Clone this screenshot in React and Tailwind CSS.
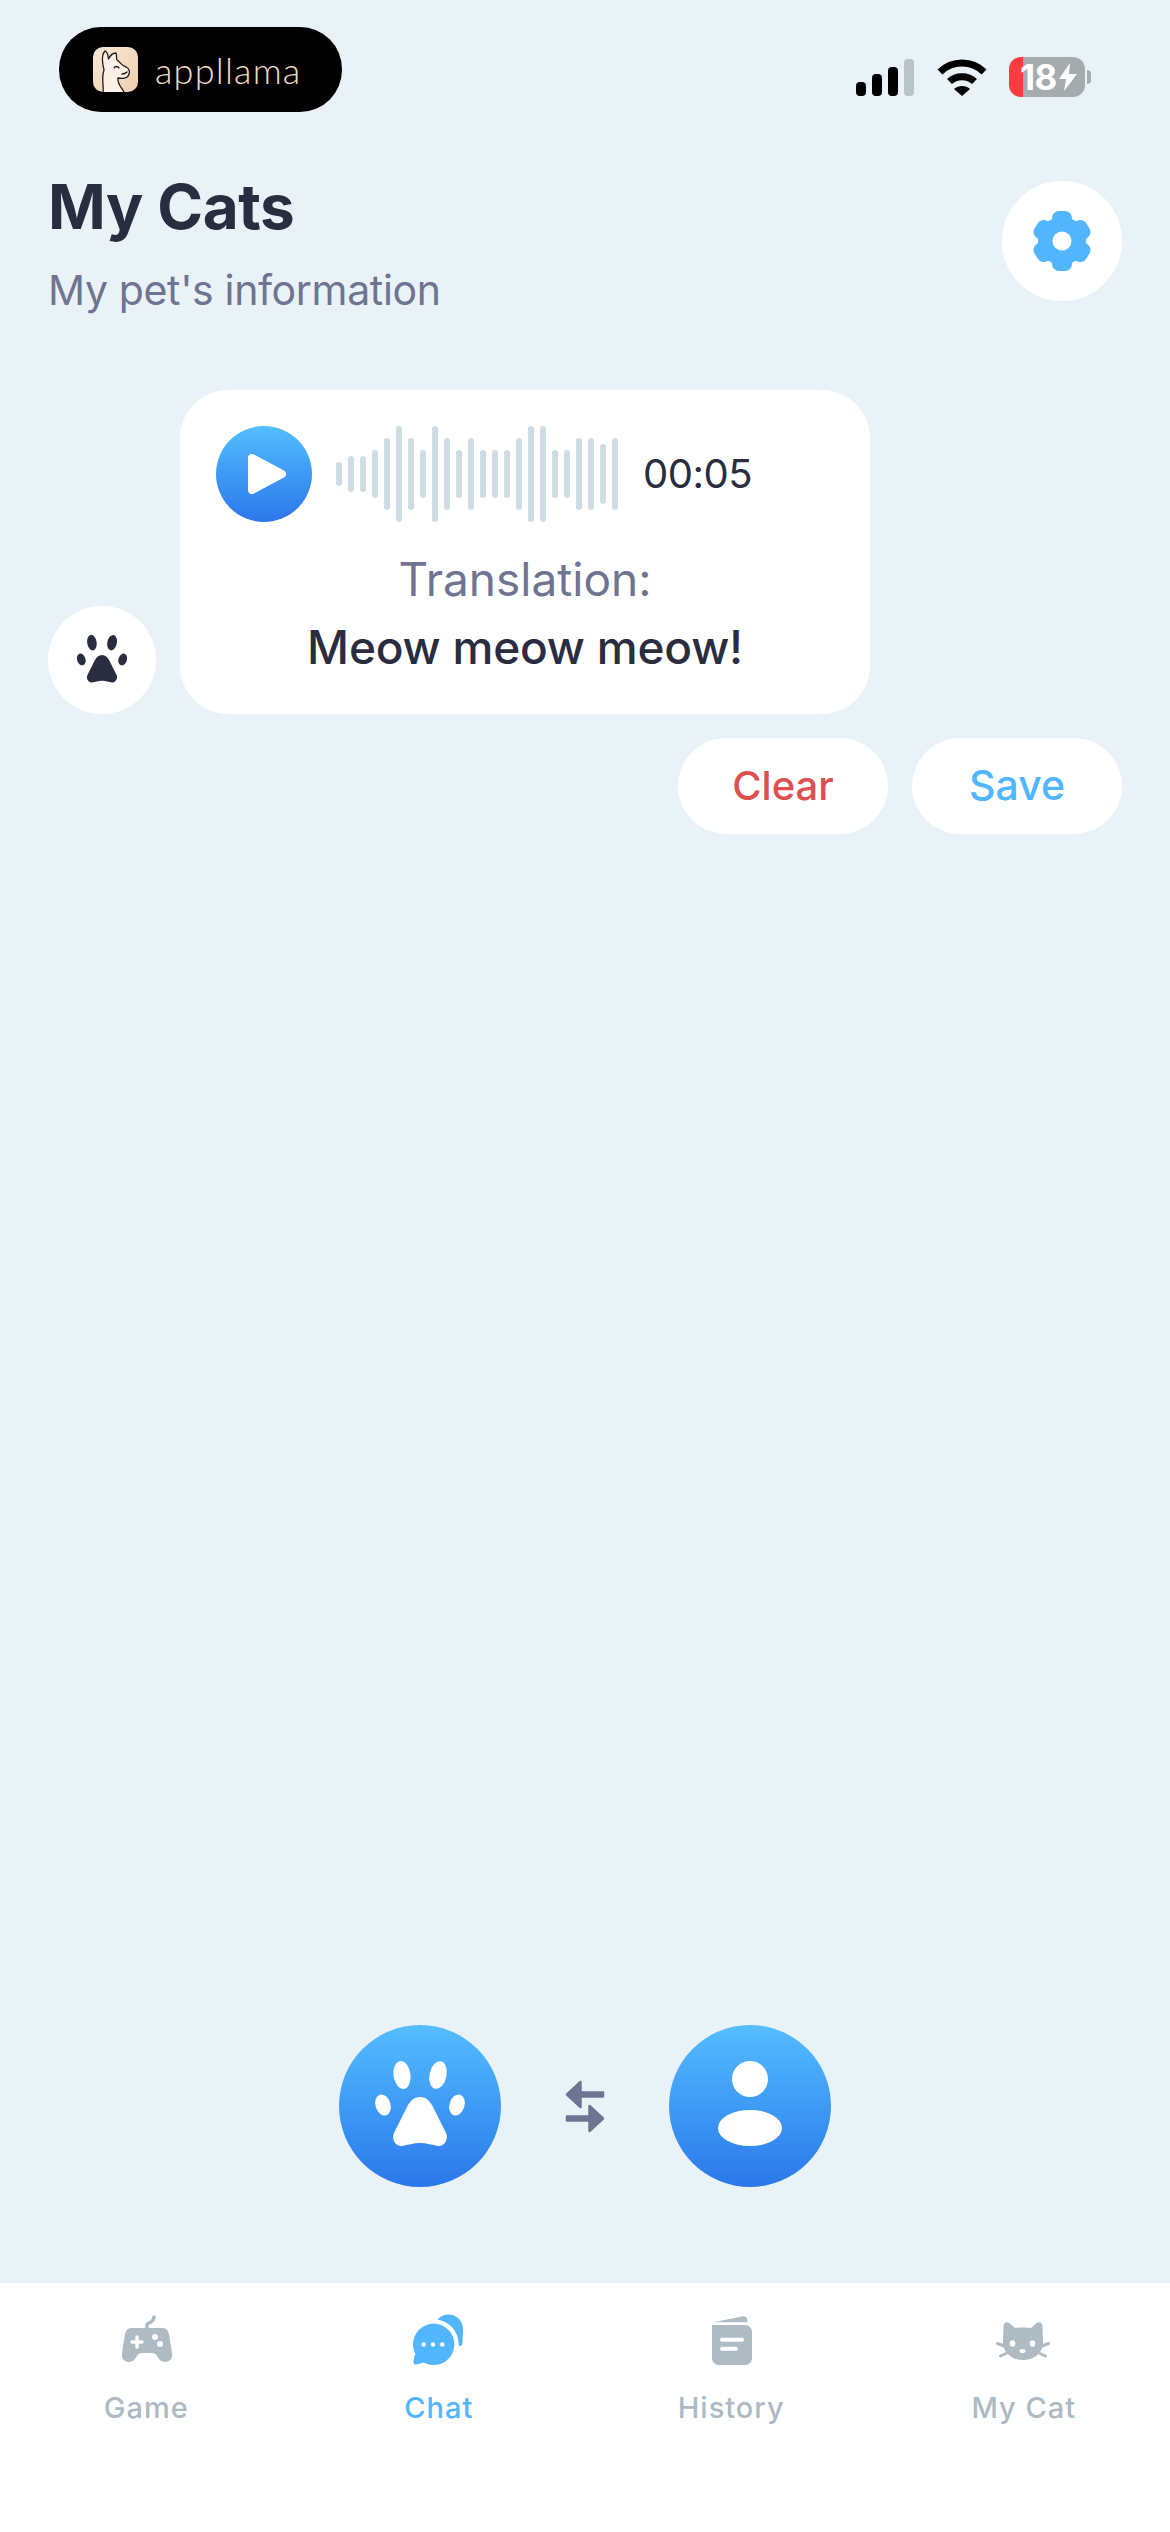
import React from "react";

const bars = [24, 36, 36, 48, 72, 96, 72, 48, 96, 72, 48, 72, 48, 48, 48, 72, 96, 96, 48, 48, 72, 72, 60, 72];
const signal = ["h-[14px] bg-black", "h-[22px] bg-black", "h-[29px] bg-black", "h-[37px] bg-[#bac3c6]"];

function PawShape({ fill }) {
  return (
    <g fill={fill}>
      <ellipse cx="-18" cy="-31" rx="8.5" ry="14" transform="rotate(-8 -18 -31)" />
      <ellipse cx="18" cy="-31" rx="8.5" ry="14" transform="rotate(12 18 -31)" />
      <ellipse cx="-37" cy="-1" rx="7.5" ry="10.8" transform="rotate(-18 -37 -1)" />
      <ellipse cx="37" cy="-1" rx="7.5" ry="10.8" transform="rotate(18 37 -1)" />
      <path d="M0 -9C6 -9 10 -5 13 1L26 27C29 33 24 41 18 40C12 39 7 37 0 37C-7 37 -12 39 -18 40C-24 41 -29 33 -26 27L-13 1C-10 -5 -6 -9 0 -9Z" />
    </g>
  );
}

function Gear() {
  return (
    <svg width="60" height="60" viewBox="-30 -30 60 60">
      <g fill="#52b6ff">
        <rect x="-10" y="-30" width="20" height="60" rx="7" />
        <rect x="-10" y="-30" width="20" height="60" rx="7" transform="rotate(60)" />
        <rect x="-10" y="-30" width="20" height="60" rx="7" transform="rotate(120)" />
        <circle r="24" />
      </g>
      <circle r="9.5" fill="#ffffff" />
    </svg>
  );
}

function Llama() {
  return (
    <div className="w-[45px] h-[45px] rounded-[10px] overflow-hidden bg-gradient-to-br from-[#f8e8d6] to-[#efcfae]">
      <svg width="45" height="45" viewBox="0 0 45 45" fill="none" stroke="#1d1a18" strokeWidth="1.3" strokeLinecap="round" strokeLinejoin="round">
        <path d="M10 45C11 38 8 31 11 23C9 15 9 7 12 4C15 5 15 9 15.5 12C17 9 20 6 23 6C24 8 23 11 24 13C27 15 29 19 33 20C36 21 37 25 36 27C35 31 30 32 25 31C24 36 28 40 31 45" fill="#fbf1e6" />
        <path d="M21 21C22 19 25 19 26 21" />
        <path d="M29 27C31 27 33 26 34 25" />
      </svg>
    </div>
  );
}

function GameIcon() {
  return (
    <svg width="60" height="60" viewBox="0 0 60 60">
      <path d="M31 19V15C31 12 38 13 38 7" fill="none" stroke="#aebbc3" strokeWidth="3.5" strokeLinecap="round" />
      <path d="M15 18H47C50 18 52 20 53 24L56 43C57 49 53 52 49 52C45 52 43 49 41 46C40 44 38 43 36 43H26C24 43 22 44 21 46C19 49 17 52 13 52C9 52 5 49 6 43L9 24C10 20 12 18 15 18Z" fill="#aebbc3" />
      <path d="M21 27V37M16 32H26" stroke="#ffffff" strokeWidth="3.4" strokeLinecap="round" />
      <circle cx="39" cy="27" r="3" fill="#ffffff" />
      <circle cx="44" cy="34" r="3" fill="#ffffff" />
    </svg>
  );
}

function ChatIcon() {
  return (
    <svg width="60" height="60" viewBox="0 0 60 60">
      <g fill="#52b6ff">
        <circle cx="39.5" cy="19" r="14.5" />
        <path d="M46 20H54L53.5 33C53.3 37 49 37 49 33Z" />
      </g>
      <circle cx="24.7" cy="34.3" r="25" fill="#ffffff" />
      <circle cx="24.7" cy="34.3" r="20.7" fill="#52b6ff" />
      <path d="M6 44L4.5 51C4 54 6 55 8 54.5L16 52Z" fill="#52b6ff" />
      <g fill="#ffffff">
        <circle cx="14.7" cy="34.5" r="2.2" />
        <circle cx="24" cy="34.5" r="2.2" />
        <circle cx="33.3" cy="34.5" r="2.2" />
      </g>
    </svg>
  );
}

function HistoryIcon() {
  return (
    <svg width="60" height="60" viewBox="0 0 60 60">
      <path d="M12.5 12.2L42 6.3C45 5.8 46.5 8 46.5 12.2Z" fill="#aebbc3" />
      <path d="M11 15H44C48 15 51 18 51 22V48C51 52 48 55 44 55H18C14 55 11 52 11 48Z" fill="#aebbc3" />
      <rect x="19" y="27.7" width="24" height="4" rx="2" fill="#ffffff" />
      <rect x="19" y="36.7" width="18" height="4" rx="2" fill="#ffffff" />
    </svg>
  );
}

function CatIcon() {
  return (
    <svg width="60" height="60" viewBox="0 0 60 60">
      <path d="M9.5 17C9.5 12 13 11 16 13.5L21 18C25 17.2 33 17.2 37 18L42 13.5C45 11 48.5 12 48.5 17L49 32C49 44 39 50 29 50C19 50 9 44 9 32Z" fill="#aebbc3" />
      <path d="M10 36L3.5 33.5M12 43.5L6.5 46M48 36L54.5 33.5M46 43.5L51.5 46" stroke="#aebbc3" strokeWidth="3" strokeLinecap="round" />
      <ellipse cx="18.5" cy="33.5" rx="2.8" ry="3.2" fill="#ffffff" />
      <ellipse cx="38.5" cy="33.5" rx="2.8" ry="3.2" fill="#ffffff" />
      <ellipse cx="28.5" cy="41" rx="3" ry="2" fill="#ffffff" />
    </svg>
  );
}

const tabs = [
  { label: "Game", Icon: GameIcon },
  { label: "Chat", Icon: ChatIcon, active: true },
  { label: "History", Icon: HistoryIcon },
  { label: "My Cat", Icon: CatIcon },
];

export default function App() {
  return (
    <div className="w-[1170px] h-[2532px] flex flex-col bg-[#e9f2f7] text-[#2a2c40] font-['Inter','Liberation_Sans',sans-serif]">
      {/* status bar */}
      <div className="flex justify-between items-start pt-[27px] pl-[59px] pr-[79px]">
        <div className="w-[283px] h-[85px] rounded-[42px] bg-black flex items-center pl-[34px] gap-[17px]">
          <Llama />
          <span className="text-[36px] leading-[40px] font-light text-[#f0dcc6] tracking-[1.2px] font-['Lato',sans-serif]">appllama</span>
        </div>
        <div className="flex items-center mt-[30px] h-[40px]">
          <div className="flex items-end gap-[6px] h-[37px]">
            {signal.map((c, i) => (
              <div key={i} className={`w-[10px] rounded-[4px] ${c}`} />
            ))}
          </div>
          <svg className="ml-[23px]" width="50" height="37" viewBox="0 0 50 37" fill="none">
            <path d="M3 13C15 1 35 1 47 13" stroke="#000" strokeWidth="7" />
            <path d="M12.5 22.5C19 16 31 16 37.5 22.5" stroke="#000" strokeWidth="7" />
            <path d="M17 30C21 26 29 26 33 30L25 37Z" fill="#000" />
          </svg>
          <div className="ml-[22px] w-[76px] h-[40px] rounded-[12px] flex items-center pl-[11px] bg-[linear-gradient(90deg,#ff3b40_14px,#a6abae_14px)]">
            <span className="text-[35px] leading-[40px] font-bold text-white tracking-[-0.5px]">18</span>
            <svg className="ml-[2px]" width="18" height="28" viewBox="0 0 18 28">
              <path d="M11 0L0 16H7L5 28L18 11H10Z" fill="#ffffff" />
            </svg>
          </div>
          <div className="ml-[2px] w-[4px] h-[14px] rounded-r-[4px] bg-[#a6abae]" />
        </div>
      </div>

      {/* header */}
      <div className="flex justify-between items-start mt-[69px] px-[48px]">
        <div className="-mt-[12px]">
          <h1 className="text-[62px] leading-[76px] font-bold tracking-[-0.4px]">My Cats</h1>
          <p className="mt-[20px] text-[41px] leading-[50px] text-[#6e7491] tracking-[-0.35px]">My pet's information</p>
        </div>
        <button className="w-[120px] h-[120px] rounded-full bg-white flex items-center justify-center">
          <Gear />
        </button>
      </div>

      {/* message */}
      <div className="flex items-end gap-[24px] mt-[75px] pl-[48px]">
        <div className="w-[108px] h-[108px] rounded-full bg-white flex items-center justify-center">
          <svg width="56" height="56" viewBox="-50 -50 100 100">
            <PawShape fill="#2a2c40" />
          </svg>
        </div>
        <div className="w-[690px] h-[324px] rounded-[48px] bg-white pt-[36px] px-[36px]">
          <div className="flex items-center">
            <div className="w-[96px] h-[96px] rounded-full bg-gradient-to-b from-[#55bdff] to-[#2c77ea]">
              <svg width="96" height="96" viewBox="0 0 96 96">
                <path d="M36 32L66 48L36 64Z" fill="#ffffff" stroke="#ffffff" strokeWidth="8" strokeLinejoin="round" />
              </svg>
            </div>
            <div className="flex items-center gap-[6px] ml-[24px]">
              {bars.map((h, i) => (
                <div key={i} className="w-[6px] rounded-full bg-[#cfdce3]" style={{ height: h }} />
              ))}
            </div>
            <span className="ml-[25px] text-[40px] leading-[50px] tracking-[-0.5px]">00:05</span>
          </div>
          <p className="mt-[29px] text-center text-[46px] leading-[56px] text-[#6e7491]">Translation:</p>
          <p className="mt-[10px] text-center text-[46px] leading-[60px] font-[450] tracking-[-0.2px]">Meow meow meow!</p>
        </div>
      </div>

      {/* clear / save */}
      <div className="flex justify-end gap-[24px] mt-[24px] pr-[48px]">
        <button className="w-[210px] h-[96px] rounded-[48px] bg-white text-[40px] font-medium text-[#dc5050]">Clear</button>
        <button className="w-[210px] h-[96px] rounded-[48px] bg-white text-[41px] font-medium text-[#52b6ff]">Save</button>
      </div>

      {/* speaker switch */}
      <div className="flex justify-center items-center gap-[64px] mt-auto mb-[96px]">
        <div className="w-[162px] h-[162px] rounded-full bg-gradient-to-b from-[#55bdff] to-[#2c77ea] flex items-center justify-center">
          <svg width="100" height="100" viewBox="-50 -50 100 100">
            <PawShape fill="#ffffff" />
          </svg>
        </div>
        <svg width="40" height="53" viewBox="0 0 40 53">
          <path d="M2 14.5L15.5 2V27Z M17 12.5H38V16.5H17Z" fill="#6e7491" stroke="#6e7491" strokeWidth="2.5" strokeLinejoin="round" />
          <path d="M38 38.5L24.5 26V51Z M23 36.5H2V40.5H23Z" fill="#6e7491" stroke="#6e7491" strokeWidth="2.5" strokeLinejoin="round" />
        </svg>
        <div className="w-[162px] h-[162px] rounded-full bg-gradient-to-b from-[#55bdff] to-[#2c77ea] flex items-center justify-center">
          <svg width="100" height="100" viewBox="-50 -50 100 100">
            <ellipse cx="0" cy="-27" rx="18" ry="18" fill="#ffffff" />
            <ellipse cx="0" cy="22" rx="32" ry="18" fill="#ffffff" />
          </svg>
        </div>
      </div>

      {/* tab bar */}
      <div className="h-[249px] bg-white grid grid-cols-4 pt-[27px]">
        {tabs.map(({ label, Icon, active }) => (
          <div key={label} className="flex flex-col items-center">
            <Icon />
            <span className={`mt-[18px] text-[29px] leading-[40px] font-medium tracking-[1px] ${active ? "text-[#52b6ff]" : "text-[#adbac3]"}`}>
              {label}
            </span>
          </div>
        ))}
      </div>
    </div>
  );
}
